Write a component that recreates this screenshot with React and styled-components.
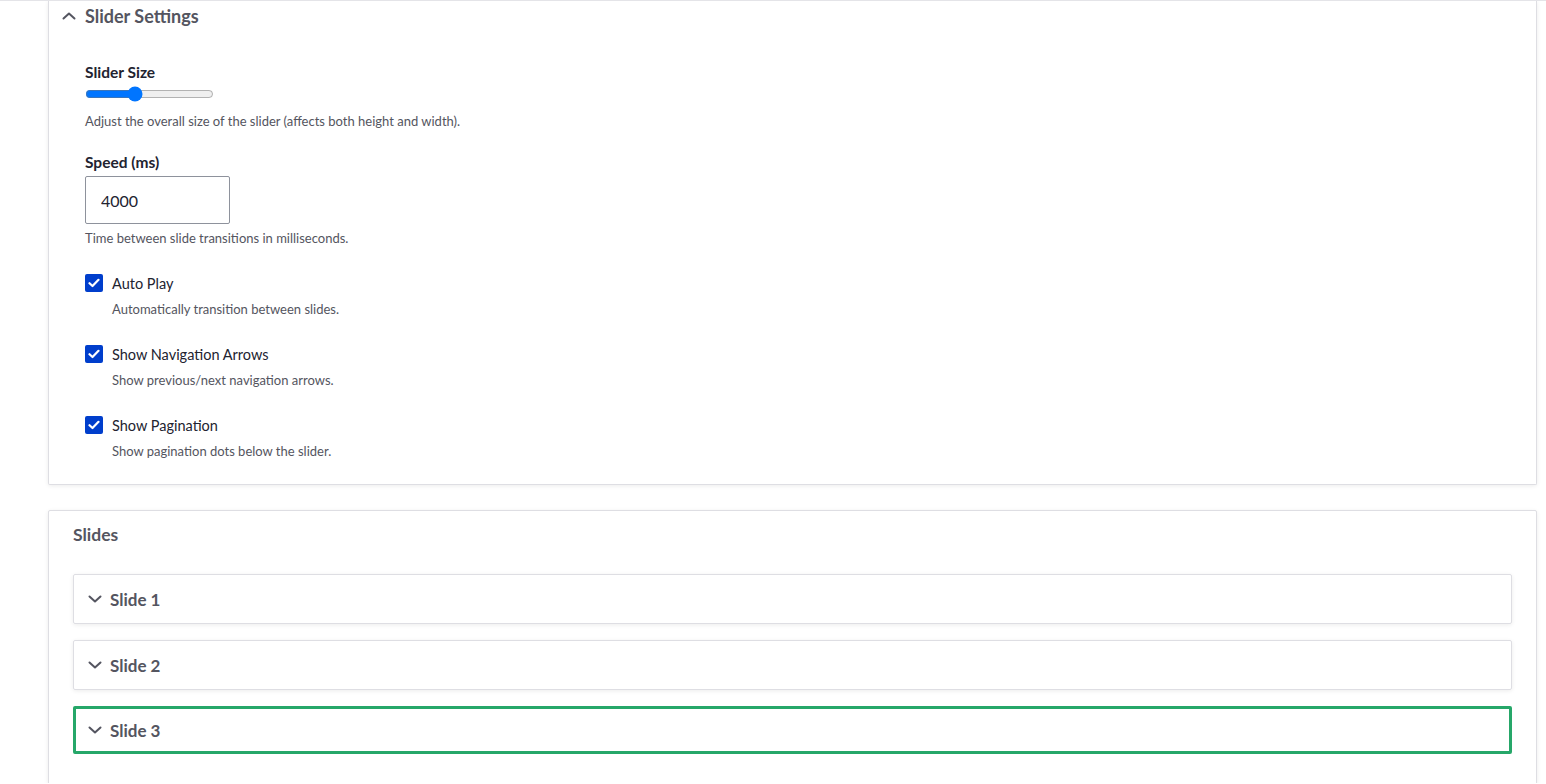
import React from "react";
import styled, { createGlobalStyle } from "styled-components";

const Global = createGlobalStyle`
  html, body { margin: 0; padding: 0; background: #fff; }
  body { font-family: Lato, "Noto Sans", sans-serif; color: #222330; }
  * { box-sizing: border-box; }
`;

const Page = styled.div`
  border-top: 1px solid #e4e4e8;
  padding: 0 9px 0 48px;
  display: flex;
  flex-direction: column;
  gap: 25px;
  height: 783px;
  overflow: hidden;
`;

const Card = styled.section`
  background: #fff;
  border: 1px solid #dedee3;
  border-top: ${(p) => (p.$open ? "none" : "1px solid #dedee3")};
  border-radius: ${(p) => (p.$open ? "0 0 2px 2px" : "2px")};
  box-shadow: 0 1px 4px rgba(0, 0, 0, 0.08);
  flex: none;
`;

const Summary = styled.div`
  display: flex;
  align-items: center;
  gap: 9px;
  height: 30px;
  padding-left: 13px;
  color: #545560;
  font-size: 18px;
  font-weight: 700;
`;

const Body = styled.div`
  padding: 32px 36px 25px 36px;
  display: flex;
  flex-direction: column;
`;

const Field = styled.div`
  display: flex;
  flex-direction: column;
  margin-bottom: ${(p) => p.$mb || 0}px;
`;

const Label = styled.label`
  font-size: 15.5px;
  font-weight: 700;
  color: #222330;
  line-height: 18px;
  margin-bottom: ${(p) => p.$mb || 0}px;
`;

const Range = styled.input`
  width: 129px;
  height: 16px;
  margin: 0;
  accent-color: #0075ff;
`;

const Desc = styled.div`
  font-size: 13px;
  line-height: 16px;
  color: #545560;
  margin-top: ${(p) => p.$mt || 0}px;
`;

const TextInput = styled.input`
  width: 145px;
  height: 48px;
  border: 1px solid #8e929c;
  border-radius: 2px;
  padding: 0 15px;
  font-size: 16px;
  font-family: Lato, "Noto Sans", sans-serif;
  color: #222330;
  outline: none;
`;

const CheckRow = styled.div`
  display: flex;
  align-items: center;
  gap: 9px;
  height: 20px;
`;

const Box = styled.span`
  width: 18px;
  height: 18px;
  border-radius: 2px;
  background: #003ecc;
  display: inline-flex;
  align-items: center;
  justify-content: center;
  flex: none;
`;

const CheckLabel = styled.span`
  font-size: 14.5px;
  color: #222330;
`;

const CheckItem = styled.div`
  display: flex;
  flex-direction: column;
  margin-bottom: ${(p) => p.$mb || 0}px;
`;

const CheckDesc = styled(Desc)`
  padding-left: 27px;
  margin-top: 8px;
`;

const SlidesBody = styled.div`
  padding: 14px 24px 30px 24px;
  display: flex;
  flex-direction: column;
`;

const SlidesTitle = styled.h2`
  margin: 0 0 29px 0;
  font-size: 17.5px;
  font-weight: 700;
  color: #545560;
  line-height: 20px;
`;

const SlideList = styled.div`
  display: flex;
  flex-direction: column;
  gap: 16px;
`;

const SlideItem = styled.div`
  height: ${(p) => (p.$focus ? 48 : 50)}px;
  border: ${(p) => (p.$focus ? "3px solid #26a769" : "1px solid #dedee3")};
  border-radius: 2px;
  box-shadow: ${(p) => (p.$focus ? "none" : "0 1px 4px rgba(0,0,0,0.08)")};
  display: flex;
  align-items: center;
  gap: 8px;
  padding-left: ${(p) => (p.$focus ? 12 : 14)}px;
  color: #545560;
  font-size: 17px;
  font-weight: 700;
`;

const Chevron = ({ up }) => (
  <svg width="14" height="14" viewBox="0 0 14 14" fill="none">
    <path
      d={up ? "M1.5 9.5 L7 4.5 L12.5 9.5" : "M1.5 4.5 L7 9.5 L12.5 4.5"}
      stroke="#545560"
      strokeWidth="2"
      strokeLinecap="round"
      strokeLinejoin="round"
    />
  </svg>
);

const Tick = () => (
  <svg width="12" height="10" viewBox="0 0 12 10" fill="none">
    <path d="M1.5 5.2 L4.5 8 L10.5 1.8" stroke="#fff" strokeWidth="2.2" strokeLinecap="round" strokeLinejoin="round" />
  </svg>
);

const checks = [
  ["Auto Play", "Automatically transition between slides."],
  ["Show Navigation Arrows", "Show previous/next navigation arrows."],
  ["Show Pagination", "Show pagination dots below the slider."],
];

export default function App() {
  return (
    <>
      <Global />
      <Page>
        <Card $open>
          <Summary>
            <Chevron up />
            <span>Slider Settings</span>
          </Summary>
          <Body>
            <Field $mb={24}>
              <Label $mb={5}>Slider Size</Label>
              <Range type="range" min="0" max="100" defaultValue="37" />
              <Desc $mt={11}>Adjust the overall size of the slider (affects both height and width).</Desc>
            </Field>
            <Field $mb={27}>
              <Label $mb={5}>Speed (ms)</Label>
              <TextInput type="text" defaultValue="4000" />
              <Desc $mt={6}>Time between slide transitions in milliseconds.</Desc>
            </Field>
            {checks.map(([l, d], i) => (
              <CheckItem key={l} $mb={i < 2 ? 27 : 0}>
                <CheckRow>
                  <Box><Tick /></Box>
                  <CheckLabel>{l}</CheckLabel>
                </CheckRow>
                <CheckDesc>{d}</CheckDesc>
              </CheckItem>
            ))}
          </Body>
        </Card>
        <Card>
          <SlidesBody>
            <SlidesTitle>Slides</SlidesTitle>
            <SlideList>
              <SlideItem><Chevron /><span>Slide 1</span></SlideItem>
              <SlideItem><Chevron /><span>Slide 2</span></SlideItem>
              <SlideItem $focus><Chevron /><span>Slide 3</span></SlideItem>
            </SlideList>
          </SlidesBody>
        </Card>
      </Page>
    </>
  );
}
